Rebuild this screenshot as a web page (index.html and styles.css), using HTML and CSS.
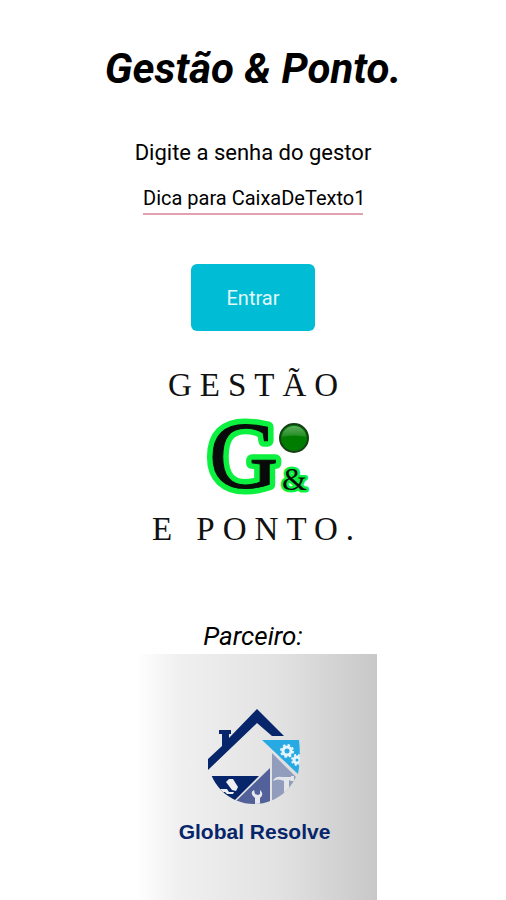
FILE: index.html
```
<!DOCTYPE html>
<html lang="pt-BR">
<head>
    <meta charset="UTF-8">
    <meta name="viewport" content="width=device-width, initial-scale=1.0">
    <title>Gestão & Ponto</title>
    <link rel="stylesheet" href="styles.css">
</head>
<body>
    <main class="tela">
        <h1>Gestão &amp; Ponto.</h1>

        <form class="login" action="#" method="post">
            <label for="senha">Digite a senha do gestor</label>
            <input type="text" id="senha" name="senha" placeholder="Dica para CaixaDeTexto1">
            <button type="submit">Entrar</button>
        </form>

        <div class="marca">
            <p class="marca-texto">GESTÃO</p>
            <svg class="marca-logo" viewBox="0 0 110 84" role="img" aria-label="G&amp;">
                <defs>
                    <linearGradient id="brilho" x1="0" y1="0" x2="0" y2="1">
                        <stop offset="0" stop-color="#5fae5f"/>
                        <stop offset="1" stop-color="#1d8a1d"/>
                    </linearGradient>
                </defs>
                <text class="letra-g contorno" x="7" y="73">G</text>
                <text class="letra-g" x="7" y="73">G</text>
                <text class="letra-e contorno" x="80" y="75">&amp;</text>
                <text class="letra-e" x="80" y="75">&amp;</text>
                <circle cx="92" cy="23" r="14" fill="#007d00" stroke="#173f17" stroke-width="2"/>
                <path d="M80 22a12 11 0 0 1 24 0q-12 -3 -24 0z" fill="url(#brilho)"/>
            </svg>
            <p class="marca-texto">E PONTO.</p>
        </div>

        <section class="parceiro">
            <h2>Parceiro:</h2>
            <div class="parceiro-card">
                <svg class="casa" viewBox="0 0 110 110" aria-hidden="true">
                    <defs>
                        <clipPath id="circulo">
                            <circle cx="54" cy="58" r="46"/>
                        </clipPath>
                    </defs>
                    <!-- telhado e chaminé -->
                    <path d="M57 9L84 36H72L57 23L8 70V59L22 46V34H19V30H31V34H29V38z" fill="#07256b"/>
                    <g clip-path="url(#circulo)">
                        <path d="M8 76H59L34 101H8z" fill="#07256b"/>
                        <path d="M70 68V110H30L35 102z" fill="#52619a"/>
                        <path d="M72 53L100 81V110H72z" fill="#929dbd"/>
                    </g>
                    <path d="M62 40H99Q101 57 98 74z" fill="#27a9e4"/>
                    <g clip-path="url(#circulo)">
                        <!-- engrenagens -->
                        <circle cx="87" cy="51" r="4" fill="none" stroke="#e9f5fb" stroke-width="3"/>
                        <circle cx="87" cy="51" r="6" fill="none" stroke="#e9f5fb" stroke-width="2" stroke-dasharray="2.4 2.3"/>
                        <circle cx="97" cy="60" r="3" fill="none" stroke="#e9f5fb" stroke-width="3"/>
                        <circle cx="97" cy="60" r="5" fill="none" stroke="#e9f5fb" stroke-width="2" stroke-dasharray="2 2"/>
                        <!-- câmera -->
                        <path d="M29 79L33 79L38 87L36 91L32 90L26 82z" fill="#eef0f3"/>
                        <path d="M20 89L27 89L29 92L34 92L33 94H27L25 92L20 92z" fill="#eef0f3"/>
                        <!-- chave -->
                        <path d="M54 90Q50 92 53 96L55 98V106H60V98Q64 95 61 91L60 90V94L58 95L55 94z" fill="#e6e8ed"/>
                        <!-- martelo -->
                        <path d="M73 81Q75 76 82 77H91V76H94V81H91L89 80V93H84V81Q78 78 73 81z" fill="#e3e5e9"/>
                    </g>
                </svg>
                <p class="parceiro-nome">Global Resolve</p>
            </div>
        </section>
    </main>
</body>
</html>
```
FILE: styles.css
```
* {
    box-sizing: border-box;
}
body {
    margin: 0;
    background: #fff;
    color: #000;
    font-family: Roboto, "Liberation Sans", sans-serif;
}
h1, h2, p {
    margin: 0;
}
.tela {
    display: flex;
    flex-direction: column;
    align-items: center;
    padding-top: 44px;
}
h1 {
    font-size: 42px;
    font-style: italic;
    line-height: 50px;
}
.login {
    display: flex;
    flex-direction: column;
    align-items: center;
    margin-top: 45px;
}
.login label {
    font-size: 22px;
    line-height: 28px;
}
.login input {
    width: 220px;
    height: 32px;
    margin-top: 16px;
    padding: 0;
    border: 0;
    border-bottom: 2px solid #e3a0b1;
    background: none;
    font-family: inherit;
    font-size: 20px;
}
.login input::placeholder {
    color: #000;
    opacity: 1;
}
.login button {
    width: 124px;
    height: 67px;
    margin-top: 49px;
    border: 0;
    border-radius: 6px;
    background: #00bcd4;
    color: #e2f8fb;
    font-family: inherit;
    font-size: 20px;
}
.marca {
    display: flex;
    flex-direction: column;
    align-items: center;
    margin-top: 34px;
    padding-left: 8px;
}
.marca-texto {
    color: #111;
    font-family: "Liberation Serif", serif;
    font-size: 33px;
    letter-spacing: 8px;
    line-height: 40px;
}
.marca-logo {
    width: 110px;
    height: 84px;
    margin: 10px 0;
    overflow: visible;
}
.letra-g,
.letra-e {
    font-family: "Liberation Serif", serif;
    fill: #0a0a0a;
    stroke: #0a0a0a;
}
.letra-g {
    font-size: 96px;
    stroke-width: 1px;
}
.letra-e {
    font-size: 32px;
    stroke-width: 0;
}
.contorno {
    stroke: #0cf03f;
    stroke-linejoin: round;
}
.letra-g.contorno {
    stroke-width: 12px;
}
.letra-e.contorno {
    stroke-width: 5px;
}
.parceiro {
    display: flex;
    flex-direction: column;
    align-items: center;
    margin-top: 69px;
}
h2 {
    font-size: 26px;
    font-style: italic;
    font-weight: normal;
    line-height: 36px;
}
.parceiro-card {
    display: flex;
    flex-direction: column;
    align-items: center;
    width: 248px;
    height: 246px;
    padding: 46px 0 0 3px;
    background: linear-gradient(to right, #fff 3%, #f0f0f0 20%, #e2e2e2 60%, #c8c8c8);
}
.casa {
    width: 110px;
    height: 110px;
}
.parceiro-nome {
    margin-top: 8px;
    color: #07256b;
    font-family: "Liberation Sans", sans-serif;
    font-size: 21px;
    font-weight: bold;
    line-height: 28px;
}
```
